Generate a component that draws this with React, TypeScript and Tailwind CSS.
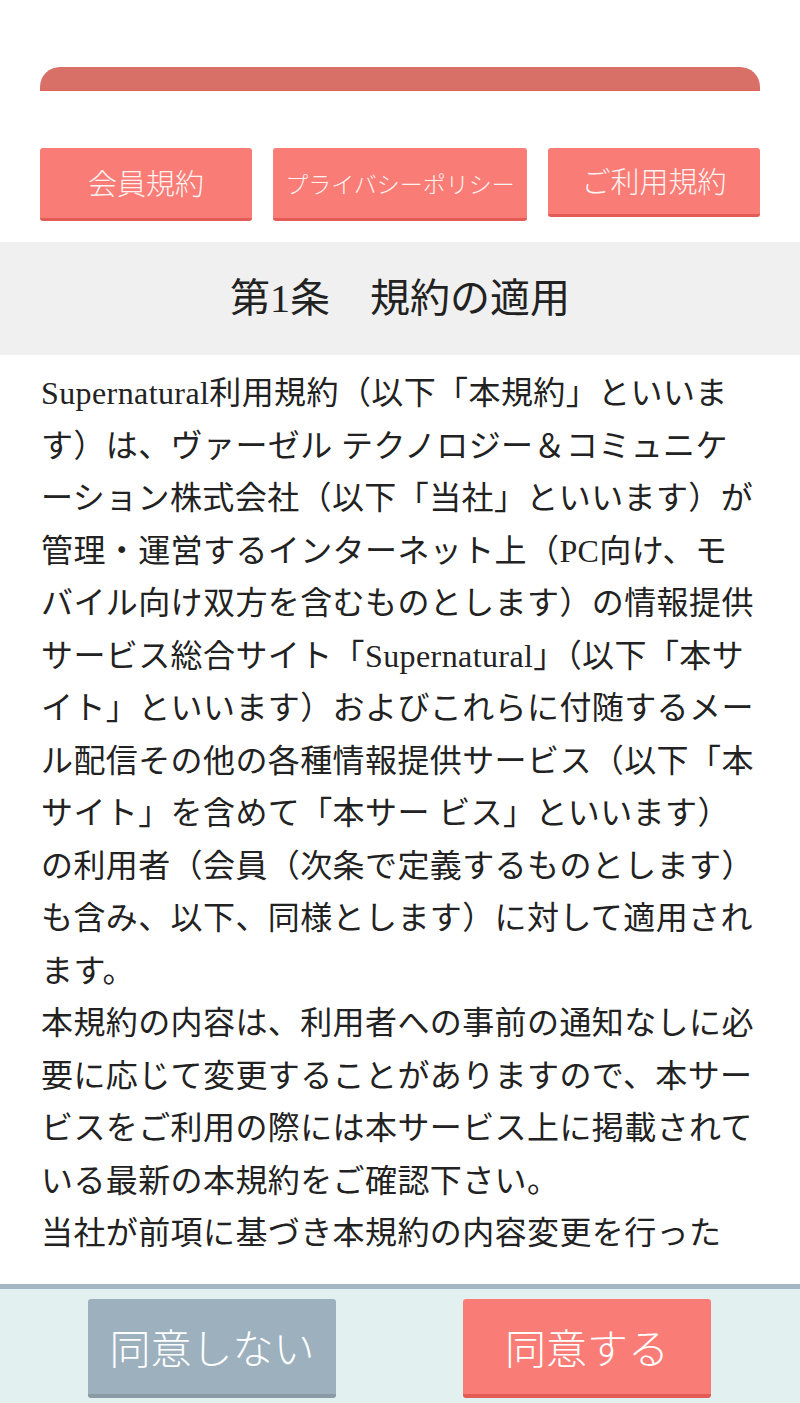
import React from "react";

const LINES: string[] = [
  "Supernatural利用規約（以下「本規約」といいま",
  "す）は、ヴァーゼル テクノロジー＆コミュニケ",
  "ーション株式会社（以下「当社」といいます）が",
  "管理・運営するインターネット上（PC向け、モ",
  "バイル向け双方を含むものとします）の情報提供",
  "サービス総合サイト「Supernatural」（以下「本サ",
  "イト」といいます）およびこれらに付随するメー",
  "ル配信その他の各種情報提供サービス（以下「本",
  "サイト」を含めて「本サー ビス」といいます）",
  "の利用者（会員（次条で定義するものとします）",
  "も含み、以下、同様とします）に対して適用され",
  "ます。",
  "本規約の内容は、利用者への事前の通知なしに必",
  "要に応じて変更することがありますので、本サー",
  "ビスをご利用の際には本サービス上に掲載されて",
  "いる最新の本規約をご確認下さい。",
  "当社が前項に基づき本規約の内容変更を行った",
];

const TABS = [
  { label: "会員規約", width: "w-[212px]", size: "text-[29px]", h: "h-[73px]" },
  { label: "プライバシーポリシー", width: "w-[254px]", size: "text-[23px]", h: "h-[73px]" },
  { label: "ご利用規約", width: "w-[212px]", size: "text-[29px]", h: "h-[69px]" },
];

const sans = "font-['Noto_Sans_CJK_JP','Noto_Sans',sans-serif]";
const serif = "font-['Liberation_Serif','Noto_Sans_CJK_JP',serif]";

export default function App() {
  return (
    <div className="flex h-[1403px] w-[800px] flex-col overflow-hidden bg-white">
      <div className="flex-1 overflow-hidden">
        {/* header strip */}
        <div className="px-10 pt-[67px]">
          <div className="h-6 rounded-t-[20px] border-b border-[#e0625a] bg-[#d97068]" />
        </div>

        {/* tabs */}
        <div className="mt-[57px] flex items-start justify-between px-10">
          {TABS.map((t) => (
            <button
              key={t.label}
              className={`${t.width} ${t.h} ${sans} ${t.size} flex items-center justify-center rounded-[3px] border-b-[3px] border-[#e25b54] bg-[#f97d76] font-light text-[#fdf3f2]`}
            >
              {t.label}
            </button>
          ))}
        </div>

        {/* article heading */}
        <div
          className={`mt-[21px] flex h-[113px] items-center justify-center bg-[#f0f0f0] ${serif} text-[40px] text-[#222]`}
        >
          第1条　規約の適用
        </div>

        {/* body */}
        <div className={`px-[41px] pt-[12px] ${serif} text-[32px] leading-[52.5px] tracking-[0.4px] text-[#222]`}>
          {LINES.map((l, i) => (
            <div key={i} className="whitespace-nowrap">
              {l}
            </div>
          ))}
        </div>
      </div>

      {/* footer */}
      <div className="flex h-[119px] shrink-0 items-start justify-between border-t-[5px] border-[#a3b6c2] bg-[#e2f0f0] pl-[88px] pr-[89px] pt-[10px]">
        <button
          className={`flex h-[99px] w-[248px] items-center justify-center rounded-[3px] border-b-[4px] border-[#8a9ba6] bg-[#9cb0be] ${sans} text-[41px] font-light text-white`}
        >
          同意しない
        </button>
        <button
          className={`flex h-[99px] w-[248px] items-center justify-center rounded-[3px] border-b-[4px] border-[#e25b54] bg-[#f97d76] ${sans} text-[41px] font-light text-white`}
        >
          同意する
        </button>
      </div>
    </div>
  );
}
